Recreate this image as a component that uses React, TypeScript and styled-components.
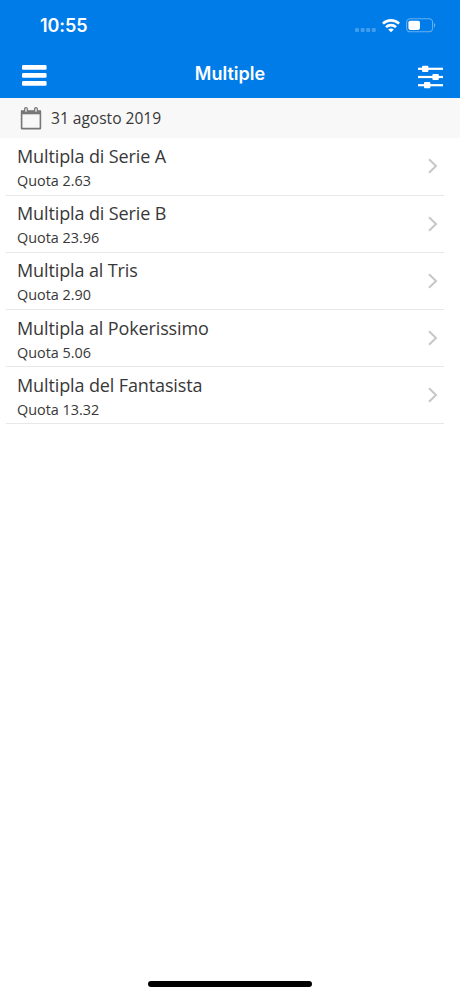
import React from 'react';
import styled, { createGlobalStyle } from 'styled-components';

const GlobalStyle = createGlobalStyle`
  * {
    box-sizing: border-box;
  }

  body {
    margin: 0;
    background: #fff;
    font-family: 'Open Sans', sans-serif;
    color: #383838;
  }
`;

const multiples = [
  { title: 'Multipla di Serie A', quota: '2.63' },
  { title: 'Multipla di Serie B', quota: '23.96' },
  { title: 'Multipla al Tris', quota: '2.90' },
  { title: 'Multipla al Pokerissimo', quota: '5.06' },
  { title: 'Multipla del Fantasista', quota: '13.32' },
];

const Screen = styled.div`
  width: 460px;
  height: 996px;
  display: flex;
  flex-direction: column;
  background: #fff;
  overflow: hidden;
`;

const Header = styled.header`
  height: 98px;
  flex-shrink: 0;
  background: #007ce8;
  color: #fff;
  font-family: Inter, sans-serif;
`;

const StatusBar = styled.div`
  height: 50px;
  display: flex;
  align-items: center;
  justify-content: space-between;
  padding: 1px 24px 0 40px;
`;

const Clock = styled.span`
  font-size: 18px;
  font-weight: 600;
  letter-spacing: -0.1px;
`;

const StatusIcons = styled.div`
  display: flex;
  align-items: center;

  svg {
    display: block;
  }
`;

const SignalSlot = styled.div`
  padding-top: 9px;
`;

const WifiSlot = styled.div`
  margin: 0 6px 0 5px;
`;

const NavBar = styled.nav`
  height: 48px;
  display: grid;
  grid-template-columns: 60px 1fr 60px;
  align-items: center;
`;

const NavTitle = styled.h1`
  margin: 0;
  font-size: 18px;
  font-weight: 600;
  line-height: 24px;
  text-align: center;
`;

const NavButton = styled.button<{ $side: 'left' | 'right' }>`
  display: flex;
  justify-content: ${props => (props.$side === 'left' ? 'flex-start' : 'flex-end')};
  padding: ${props => (props.$side === 'left' ? '2px 0 0 22px' : '6px 17px 0 0')};
  border: 0;
  background: none;
  color: inherit;
`;

const DateBar = styled.div`
  height: 40px;
  flex-shrink: 0;
  display: flex;
  align-items: center;
  gap: 9px;
  padding-left: 20px;
  background: #f8f8f8;
`;

const DateLabel = styled.span`
  font-size: 15.6px;
  line-height: 22px;
  letter-spacing: -0.03px;
`;

const List = styled.ul`
  list-style: none;
  margin: 0;
  padding: 0.4px 16px 0 6px;
  flex: 1;
`;

const Row = styled.li`
  height: 57.2px;
  display: flex;
  align-items: center;
  justify-content: space-between;
  padding: 2px 6px 0 11px;
  border-bottom: 1px solid #e8e8e8;

  svg {
    margin-bottom: 2px;
  }
`;

const RowTitle = styled.div`
  font-size: 18px;
  line-height: 25px;
  letter-spacing: -0.12px;
`;

const RowQuota = styled.div`
  font-size: 14.4px;
  line-height: 20px;
  margin-top: 2px;
`;

const HomeIndicator = styled.div`
  width: 164px;
  height: 6px;
  margin: 0 auto 9px;
  border-radius: 3px;
  background: #000;
`;

const SignalIcon = () => (
  <svg width="22" height="5" viewBox="0 0 22 5" fill="#fff" fillOpacity="0.25">
    <rect x="0" y="0" width="4" height="4" rx="1" />
    <rect x="5.6" y="0" width="4" height="4" rx="1" />
    <rect x="11.2" y="0" width="4" height="4" rx="1" />
    <rect x="16.8" y="0" width="4" height="4" rx="1" />
  </svg>
);

const WifiIcon = () => (
  <svg width="18" height="14" viewBox="0 0 18 14" fill="none" stroke="#fff" strokeWidth="2.6">
    <path d="M0.9 4.7C5.4 0.2 12.6 0.2 17.1 4.7" />
    <path d="M4 8.1C6.8 5.4 11.2 5.4 14 8.1" />
    <path d="M9 13.3L6.2 10.5C7.8 9.1 10.2 9.1 11.8 10.5Z" fill="#fff" stroke="none" />
  </svg>
);

const BatteryIcon = () => (
  <svg width="30" height="15" viewBox="0 0 30 15" fill="none">
    <rect x="0.6" y="0.8" width="26" height="13" rx="3.6" stroke="#fff" strokeOpacity="0.4" strokeWidth="1.1" />
    <rect x="2.4" y="2.7" width="11.6" height="9.2" rx="1.8" fill="#fff" />
    <path d="M28 5.1C29.7 5.8 29.7 8.9 28 9.6Z" fill="#fff" fillOpacity="0.4" />
  </svg>
);

const MenuIcon = () => (
  <svg width="25" height="21" viewBox="0 0 25 21" fill="#fff">
    <rect x="0" y="0.1" width="24.6" height="4.6" rx="1.3" />
    <rect x="0" y="8.1" width="24.6" height="4.6" rx="1.3" />
    <rect x="0" y="16.1" width="24.6" height="4.6" rx="1.3" />
  </svg>
);

const FilterIcon = () => (
  <svg width="25" height="24" viewBox="0 0 25 24" fill="#fff">
    <rect x="0" y="2.7" width="25" height="2.2" />
    <rect x="0" y="10.9" width="25" height="2.2" />
    <rect x="0" y="19.1" width="25" height="2.2" />
    <rect x="4" y="0.7" width="6.4" height="6.2" rx="1" />
    <rect x="14.4" y="8.9" width="6.4" height="6.2" rx="1" />
    <rect x="6" y="17.1" width="6.4" height="6.2" rx="1" />
  </svg>
);

const CalendarIcon = () => (
  <svg width="22" height="23" viewBox="0 0 22 23" fill="none" stroke="#777">
    <path d="M1.6 4.2H20.4V21.6H1.6Z" strokeWidth="1.6" strokeLinejoin="round" />
    <path d="M1 3.4H21V7.3H1Z" fill="#777" stroke="none" />
    <rect x="4.7" y="0.7" width="2.6" height="4.8" rx="1.2" fill="#f8f8f8" strokeWidth="1.3" />
    <rect x="14.7" y="0.7" width="2.6" height="4.8" rx="1.2" fill="#f8f8f8" strokeWidth="1.3" />
  </svg>
);

const ChevronIcon = () => (
  <svg width="11" height="16" viewBox="0 0 11 16" fill="none" stroke="#c7c7c9" strokeWidth="2">
    <path d="M2 1.3L9 8L2 14.7" />
  </svg>
);

const App: React.FC = () => {
  return (
    <>
      <GlobalStyle />
      <Screen>
        <Header>
          <StatusBar>
            <Clock>10:55</Clock>
            <StatusIcons>
              <SignalSlot>
                <SignalIcon />
              </SignalSlot>
              <WifiSlot>
                <WifiIcon />
              </WifiSlot>
              <BatteryIcon />
            </StatusIcons>
          </StatusBar>
          <NavBar>
            <NavButton $side="left" aria-label="Menu">
              <MenuIcon />
            </NavButton>
            <NavTitle>Multiple</NavTitle>
            <NavButton $side="right" aria-label="Filtri">
              <FilterIcon />
            </NavButton>
          </NavBar>
        </Header>

        <DateBar>
          <CalendarIcon />
          <DateLabel>31 agosto 2019</DateLabel>
        </DateBar>

        <List>
          {multiples.map(item => (
            <Row key={item.title}>
              <div>
                <RowTitle>{item.title}</RowTitle>
                <RowQuota>Quota {item.quota}</RowQuota>
              </div>
              <ChevronIcon />
            </Row>
          ))}
        </List>

        <HomeIndicator />
      </Screen>
    </>
  );
};

export default App;
